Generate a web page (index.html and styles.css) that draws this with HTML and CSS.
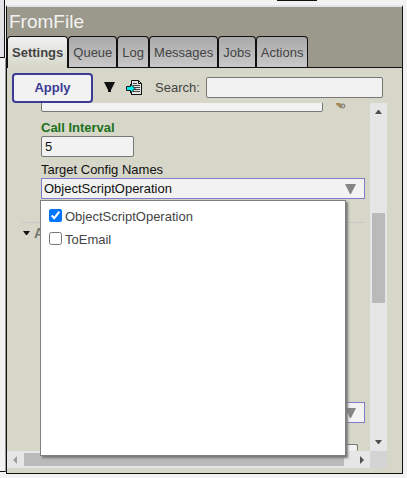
FILE: index.html
```html
<!DOCTYPE html>
<html lang="en">
<head>
<meta charset="utf-8">
<title>FromFile</title>
<link rel="stylesheet" href="styles.css">
</head>
<body>
<div class="page">
  <div class="side"><div class="side-top"></div><div class="side-main"></div></div>
  <main class="panel">
    <header class="head">
      <h1 class="title">FromFile</h1>
      <div class="tabs" role="tablist">
        <button class="tab active" role="tab" aria-selected="true">Settings</button>
        <button class="tab" role="tab">Queue</button>
        <button class="tab" role="tab">Log</button>
        <button class="tab" role="tab">Messages</button>
        <button class="tab" role="tab">Jobs</button>
        <button class="tab" role="tab">Actions</button>
      </div>
    </header>
    <div class="toolbar">
      <button class="apply">Apply</button>
      <button class="icon-btn arrow-btn" aria-label="More">
        <svg width="11" height="11" viewBox="0 0 11 11"><path d="M0 0h11L7 8v2H4V8z" fill="#111"/></svg>
      </button>
      <button class="icon-btn" aria-label="Import">
        <svg width="17" height="16" viewBox="0 0 17 16">
          <path d="M5.500 .5h7l3 3v11h-10z" fill="#e4e4e4" stroke="#111"/>
          <path d="M12.500 .5v3h3" fill="none" stroke="#111"/>
          <path d="M7 3.500h4M7 5.500h7M7 7.500h7M7 9.500h7M7 11.500h7" stroke="#444"/>
          <path d="M5 14.500h11" stroke="#111"/>
          <path d="M.5 6.500h4v-2.500l4.500 4.500-4.500 4.500v-2.500h-4z" fill="#0ee" stroke="#111"/>
        </svg>
      </button>
      <label class="search-label" for="search">Search:</label>
      <input class="box search" id="search" type="text">
    </div>
    <div class="scroller">
      <div class="view">
        <div class="row-cut">
          <input class="box path" type="text" aria-label="File path">
          <svg class="search-icon" width="10" height="20" viewBox="0 0 10 20"><path d="M0 11l6 5" stroke="#a98955" stroke-width="4"/><circle cx="7" cy="15" r="2" fill="#bbb" stroke="#777"/></svg>
        </div>
        <label class="label strong" for="interval">Call Interval</label>
        <input class="box interval" id="interval" type="text" value="5">
        <label class="label" for="target">Target Config Names</label>
        <div class="combo">
          <input class="combo-text" id="target" type="text" value="ObjectScriptOperation" readonly>
          <button class="combo-btn" aria-label="Open list"><svg width="11" height="10" viewBox="0 0 11 10"><path d="M0 0h11L6 10H5z" fill="#858585"/></svg></button>
          <div class="popup">
            <label class="option"><input type="checkbox" checked>ObjectScriptOperation</label>
            <label class="option"><input type="checkbox">ToEmail</label>
          </div>
        </div>
        <section class="group">
          <h2 class="group-title"><svg width="7" height="4" viewBox="0 0 7 4"><path d="M0 0h7L4 4H3z" fill="#111"/></svg>A</h2>
          <div class="combo">
            <input class="combo-text" type="text" aria-label="Setting" readonly>
            <button class="combo-btn" aria-label="Open list"><svg width="11" height="10" viewBox="0 0 11 10"><path d="M0 0h11L6 10H5z" fill="#858585"/></svg></button>
          </div>
          <input class="box last" type="text" aria-label="Value">
        </section>
      </div>
      <div class="vbar">
        <svg width="7" height="4" viewBox="0 0 7 4"><path d="M0 4h7L4 0H3z" fill="#505050"/></svg>
        <div class="vthumb"></div>
        <svg width="7" height="4" viewBox="0 0 7 4"><path d="M0 0h7L4 4H3z" fill="#505050"/></svg>
      </div>
      <div class="hbar">
        <svg width="4" height="8" viewBox="0 0 4 8"><path d="M4 0v8L0 4z" fill="#a0a0a0"/></svg>
        <div class="hthumb"></div>
        <svg width="4" height="8" viewBox="0 0 4 8"><path d="M0 0v8l4-4z" fill="#505050"/></svg>
      </div>
      <div class="corner"></div>
    </div>
  </main>
  <div class="handle"></div>
</div>
</body>
</html>
```
FILE: styles.css
```css
* { box-sizing: border-box; }
body {
  margin: 0;
  background: #f2f2f2;
  font: 13px/15px "Liberation Sans", Arial, sans-serif;
  color: #111;
}
button, input { font: inherit; color: inherit; margin: 0; border-radius: 0; }
button { padding: 0; border: 0; background: none; }
svg { display: block; }
.page { position: relative; display: flex; padding-right: 4px; }
.handle {
  position: absolute;
  top: 0;
  right: 90px;
  width: 40px;
  height: 1px;
  background: #111;
}
.side { flex: none; width: 6px; display: flex; flex-direction: column; padding-bottom: 2px; }
.side-top {
  height: 58px;
  margin-right: 1px;
  border: solid #111;
  border-width: 0 1px 1px 0;
  background: #e3e3e8;
}
.side-main { flex: 1; border-right: 1px solid #999; border-bottom: 1px solid #111; }
.panel {
  flex: 1;
  min-width: 0;
  margin-top: 5px;
  border: 1px solid #111;
  border-top: 2px solid #e3e3e8;
  background: #d6d7c9;
}
.head { background: #9b988c; border-bottom: 1px solid #111; }
.title { margin: 0; padding: 4px 2px 3px; font-size: 19px; line-height: 22px; font-weight: normal; color: #f2f2f2; }
.tabs { display: flex; }
.tab {
  height: 31px;
  padding: 0 4px;
  border: 1px solid #111;
  border-bottom: 0;
  border-radius: 4px 4px 0 0;
  background: linear-gradient(#a9a9a9, #c8c8c8);
  color: #444;
}
.tab.active {
  margin-bottom: -1px;
  padding-bottom: 1px;
  height: 32px;
  background: linear-gradient(#f0f0f0, #d6d7c9);
  font-weight: bold;
}
.toolbar { position: relative; display: flex; align-items: center; height: 35px; padding: 4px 19px 0 5px; }
.apply {
  width: 81px;
  height: 30px;
  border: 2px solid #3b3b94;
  border-radius: 4px;
  background: #f2f2f2;
  color: #3b3b94;
  font-weight: bold;
}
.arrow-btn { margin: 0 11px; }
.search-label { margin: 0 6px 0 12px; color: #444; }
.box {
  height: 21px;
  padding: 0 3px;
  border: 1px solid #777;
  border-radius: 2px;
  background: #f2f2f2;
}
.search { flex: 1; min-width: 0; }
.scroller {
  display: grid;
  grid-template: 348px 17px / 1fr 17px;
  margin: 0 15px 5px 0;
}
.view { position: relative; min-width: 0; padding: 0 5px 0 34px; clip-path: inset(0 0 -16px 0); }
.row-cut { display: flex; margin-top: -12px; margin-bottom: 8px; }
.path { flex: 1; min-width: 0; }
.search-icon { flex: none; margin: 0 19px 0 13px; }
.label { display: block; height: 16px; }
.label.strong { color: #207020; font-weight: bold; }
.interval { display: block; width: 93px; margin-bottom: 5px; }
.combo {
  position: relative;
  display: flex;
  height: 21px;
  border: 1px solid #7d7dc8;
  background: #f2f2f2;
}
.combo-text { flex: 1; min-width: 0; padding: 0 2px; border: 0; background: none; }
.combo-btn { flex: none; padding: 0 8px; }
.popup {
  position: absolute;
  z-index: 1;
  top: 21px;
  left: -2px;
  right: 18px;
  height: 256px;
  padding: 4px 8px;
  border: 1px solid #808080;
  background: #fff;
  box-shadow: 2px 2px 2px #777;
}
.option { display: flex; align-items: center; gap: 3px; height: 23px; color: #444; }
.option input { width: 13px; height: 13px; margin: 0 0 2px; }
.group { margin: 23px 0 0 -19px; padding-left: 19px; border-top: 1px solid #c8c8c8; }
.group-title {
  display: flex;
  align-items: center;
  gap: 4px;
  height: 20px;
  margin: 0 0 159px -18px;
  font-size: 14px;
  color: #777;
}
.last { display: block; height: 7px; width: calc(100% - 7px); margin-top: 21px; border-bottom: 0; }
.vbar {
  display: flex;
  flex-direction: column;
  align-items: center;
  padding: 7px 0;
  background: #e6e6e6;
}
.vthumb { width: 13px; height: 90px; margin: 99px 0 auto; background: #bababa; }
.hbar { display: flex; align-items: center; padding: 0 6px; background: #e6e6e6; }
.hthumb { flex: 1; height: 13px; margin: 0 16px 0 7px; background: #bababa; }
.corner { background: #d4d4d4; }
```
